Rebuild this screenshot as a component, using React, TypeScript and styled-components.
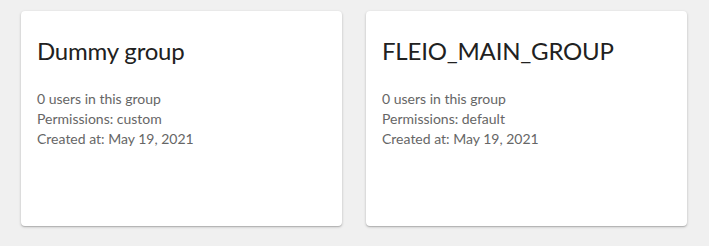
import React from "react";
import styled, { createGlobalStyle } from "styled-components";

const GlobalStyle = createGlobalStyle`
  html, body {
    margin: 0;
    padding: 0;
    background: #f0f0f0;
    font-family: "Lato", "Open Sans", sans-serif;
  }
`;

const Grid = styled.main`
  display: grid;
  grid-template-columns: repeat(2, 321px);
  gap: 24px;
  padding: 11px 21px;
`;

const Card = styled.section`
  height: 215px;
  box-sizing: border-box;
  padding: 26px 16px;
  background: #ffffff;
  border-radius: 4px;
  box-shadow: 0 1px 3px rgba(0, 0, 0, 0.2), 0 1px 1px rgba(0, 0, 0, 0.14);
`;

const Title = styled.h2`
  margin: 0 0 24px;
  font-size: 24px;
  font-weight: 400;
  line-height: 28px;
  letter-spacing: -0.2px;
  color: #212121;
`;

const Info = styled.p`
  margin: 0;
  font-size: 14px;
  line-height: 20px;
  color: #666666;
`;

type Group = {
  name: string;
  users: number;
  permissions: string;
  createdAt: string;
};

const groups: Group[] = [
  { name: "Dummy group", users: 0, permissions: "custom", createdAt: "May 19, 2021" },
  { name: "FLEIO_MAIN_GROUP", users: 0, permissions: "default", createdAt: "May 19, 2021" },
];

export default function App() {
  return (
    <>
      <GlobalStyle />
      <Grid>
        {groups.map((group) => (
          <Card key={group.name}>
            <Title>{group.name}</Title>
            <Info>{group.users} users in this group</Info>
            <Info>Permissions: {group.permissions}</Info>
            <Info>Created at: {group.createdAt}</Info>
          </Card>
        ))}
      </Grid>
    </>
  );
}
